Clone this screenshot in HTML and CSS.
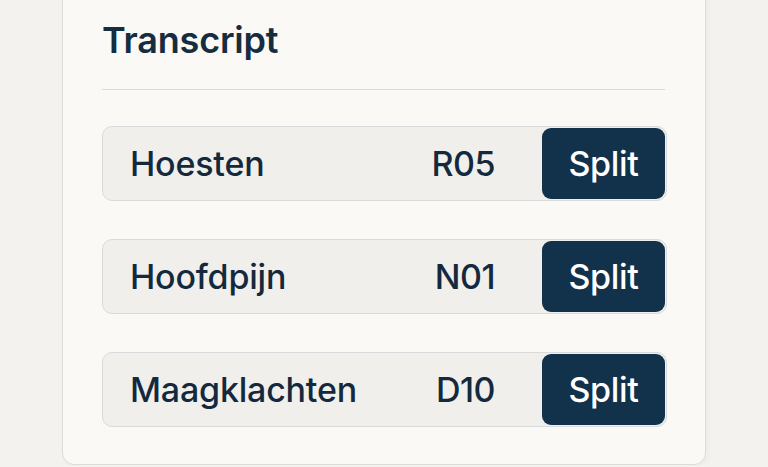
FILE: index.html
```html
<!DOCTYPE html>
<html lang="nl">
<head>
<meta charset="utf-8">
<title>Transcript</title>
<link rel="stylesheet" href="styles.css">
</head>
<body>
<main class="card">
  <h1 class="title">Transcript</h1>
  <hr class="divider">
  <ul class="rows">
    <li class="row"><span class="label">Hoesten</span><span class="code">R05</span><button class="split">Split</button></li>
    <li class="row"><span class="label">Hoofdpijn</span><span class="code">N01</span><button class="split">Split</button></li>
    <li class="row"><span class="label">Maagklachten</span><span class="code">D10</span><button class="split">Split</button></li>
  </ul>
</main>
</body>
</html>
```
FILE: styles.css
```css
html, body {
  margin: 0;
  padding: 0;
  background: #f4f2ee;
  font-family: Inter, "Liberation Sans", sans-serif;
  color: #14293d;
}

.card {
  box-sizing: border-box;
  width: 644px;
  margin: -20px 0 0 62px;
  padding: 37px 38px 37px 39px;
  background: #faf9f6;
  border: 1px solid #dedcd7;
  border-radius: 0 0 12px 12px;
  box-shadow: 2px 2px 6px rgba(0, 0, 0, 0.03);
}

.title {
  margin: 0;
  font-size: 36px;
  line-height: 44px;
  font-weight: 600;
  letter-spacing: -0.2px;
  color: #162c40;
}

.divider {
  margin: 27px 2px 36px 0;
  border: 0;
  border-top: 1px solid #d9d9d6;
  height: 0;
}

.rows {
  list-style: none;
  margin: 0;
  padding: 0;
  display: flex;
  flex-direction: column;
  gap: 38px;
}

.row {
  display: flex;
  align-items: center;
  height: 75px;
  box-sizing: border-box;
  padding: 1px;
  background: #f0efeb;
  border: 1px solid #d9dadb;
  border-radius: 10px;
}

.label {
  flex: 1;
  padding-left: 26px;
  font-size: 34px;
  font-weight: 500;
  letter-spacing: -0.2px;
}

.code {
  margin-right: 47px;
  font-size: 34px;
  font-weight: 500;
  letter-spacing: -0.5px;
}

.split {
  width: 123px;
  height: 71px;
  border: 0;
  border-radius: 9px;
  background: #12324b;
  color: #ffffff;
  font-family: Inter, "Liberation Sans", sans-serif;
  font-size: 34px;
  font-weight: 500;
  letter-spacing: -0.3px;
  padding: 0;
}
```
